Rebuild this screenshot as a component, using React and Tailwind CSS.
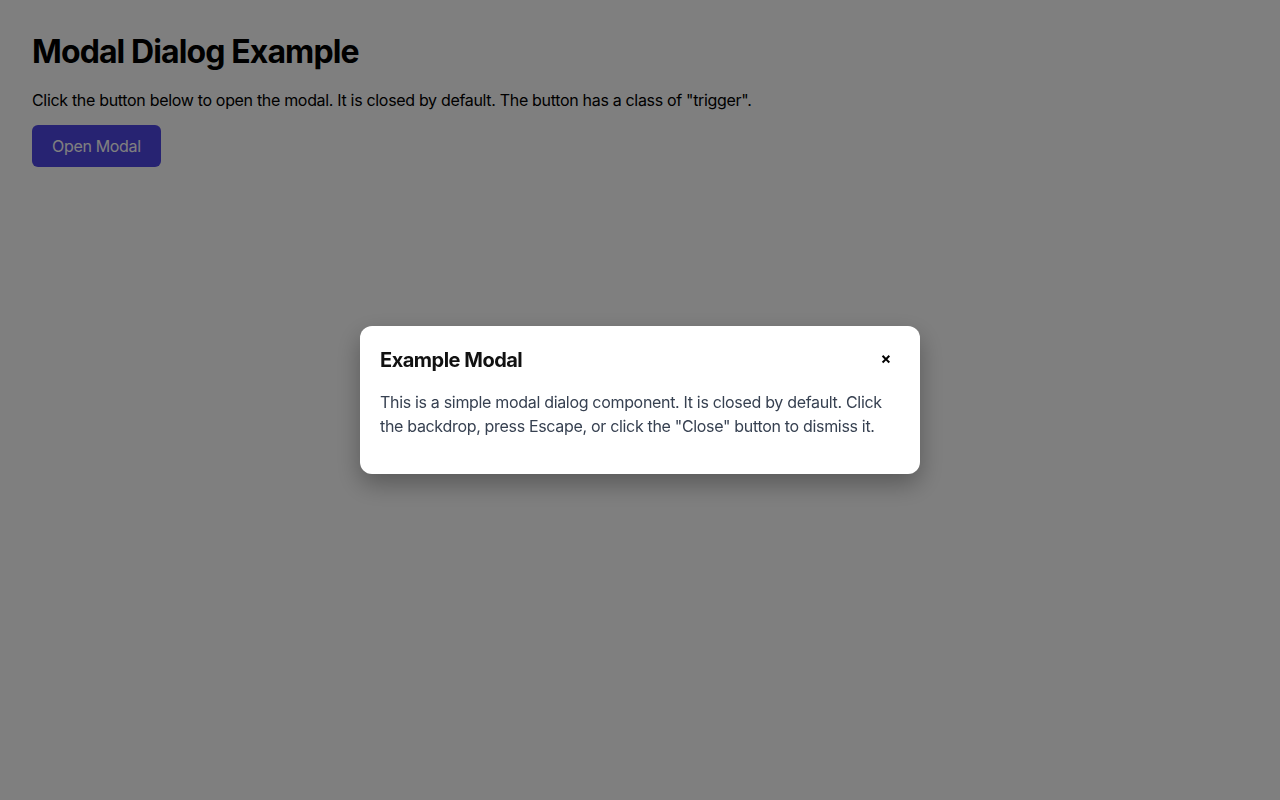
export default function App() {
  return (
    <div className="relative w-full min-h-[800px] bg-white text-black font-['Inter','Liberation_Sans',sans-serif]">
      <div className="p-8">
        <h1 className="text-[32px] font-bold leading-10 tracking-[-0.028em]">Modal Dialog Example</h1>
        <p className="mt-4 text-base leading-6 tracking-[-0.02em]">
          Click the button below to open the modal. It is closed by default. The button has a class of "trigger".
        </p>
        <button className="trigger mt-[13px] h-[42px] px-5 rounded-md bg-[#4f46e5] text-white text-base tracking-[-0.02em]">Open Modal</button>
      </div>

      {/* backdrop */}
      <div className="fixed inset-0 bg-black/50 flex items-center justify-center">
        <div className="w-[560px] bg-white rounded-xl shadow-[0_10px_25px_rgba(0,0,0,0.3)] px-5 pt-5 pb-9">
          <div className="flex items-center justify-between h-7">
            <h2 className="text-xl font-bold leading-7 tracking-[-0.025em] text-[#111111]">Example Modal</h2>
            <button className="w-6 h-7 mr-0.5 -mt-1 flex items-center justify-center text-base font-bold leading-none text-black">×</button>
          </div>
          <p className="mt-4 text-base leading-6 tracking-[-0.02em] text-[#374151]">
            This is a simple modal dialog component. It is closed by default. Click the backdrop, press Escape, or click the "Close" button to dismiss it.
          </p>
        </div>
      </div>
    </div>
  )
}
